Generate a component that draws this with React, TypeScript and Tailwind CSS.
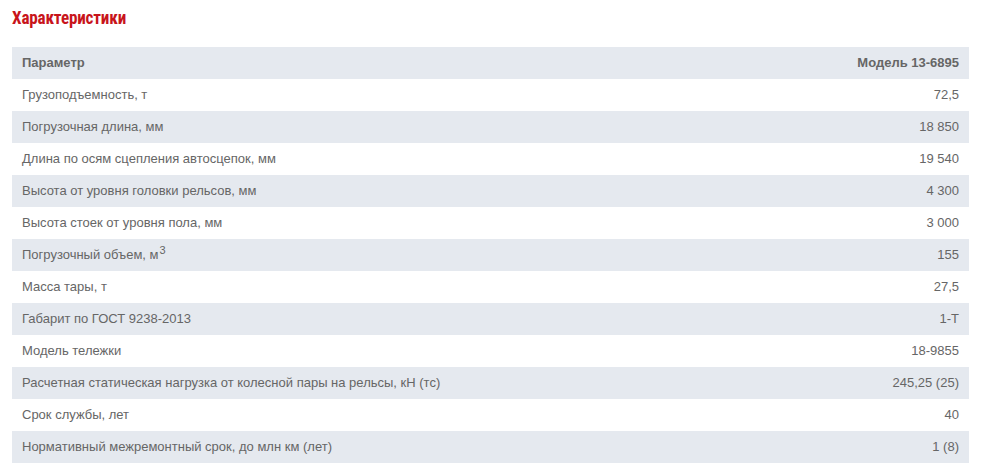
import React from "react";

const rows: [React.ReactNode, string][] = [
  ["Грузоподъемность, т", "72,5"],
  ["Погрузочная длина, мм", "18 850"],
  ["Длина по осям сцепления автосцепок, мм", "19 540"],
  ["Высота от уровня головки рельсов, мм", "4 300"],
  ["Высота стоек от уровня пола, мм", "3 000"],
  [<>Погрузочный объем, м<span className="text-[11px] relative -top-[5px] ml-[1px]">3</span></>, "155"],
  ["Масса тары, т", "27,5"],
  ["Габарит по ГОСТ 9238-2013", "1-Т"],
  ["Модель тележки", "18-9855"],
  ["Расчетная статическая нагрузка от колесной пары на рельсы, кН (тс)", "245,25 (25)"],
  ["Срок службы, лет", "40"],
  ["Нормативный межремонтный срок, до млн км (лет)", "1 (8)"],
];

export default function App() {
  return (
    <div className="w-[986px] h-[472px] bg-white overflow-hidden" style={{ fontFamily: '"Liberation Sans", Arial, sans-serif' }}>
      <div className="pl-[12px] pt-[6px] h-[47px]">
        <h2
          className="text-[19px] font-bold text-[#c8141b] leading-[24px] tracking-[-0.2px] origin-left scale-x-[0.9] inline-block"
          style={{ fontFamily: '"Roboto Condensed", "Liberation Sans Narrow", "DejaVu Sans Condensed", sans-serif' }}
        >
          Характеристики
        </h2>
      </div>
      <div className="ml-[12px] w-[957px] text-[13px] text-[#666]">
        <div className="flex items-center justify-between h-[32px] bg-[#e5e9ef] px-[10px] font-bold">
          <span>Параметр</span>
          <span>Модель 13-6895</span>
        </div>
        {rows.map(([k, v], i) => (
          <div
            key={i}
            className={`flex items-center justify-between h-[32px] px-[10px] ${i % 2 === 1 ? "bg-[#e5e9ef]" : "bg-white"}`}
          >
            <span>{k}</span>
            <span>{v}</span>
          </div>
        ))}
      </div>
    </div>
  );
}
